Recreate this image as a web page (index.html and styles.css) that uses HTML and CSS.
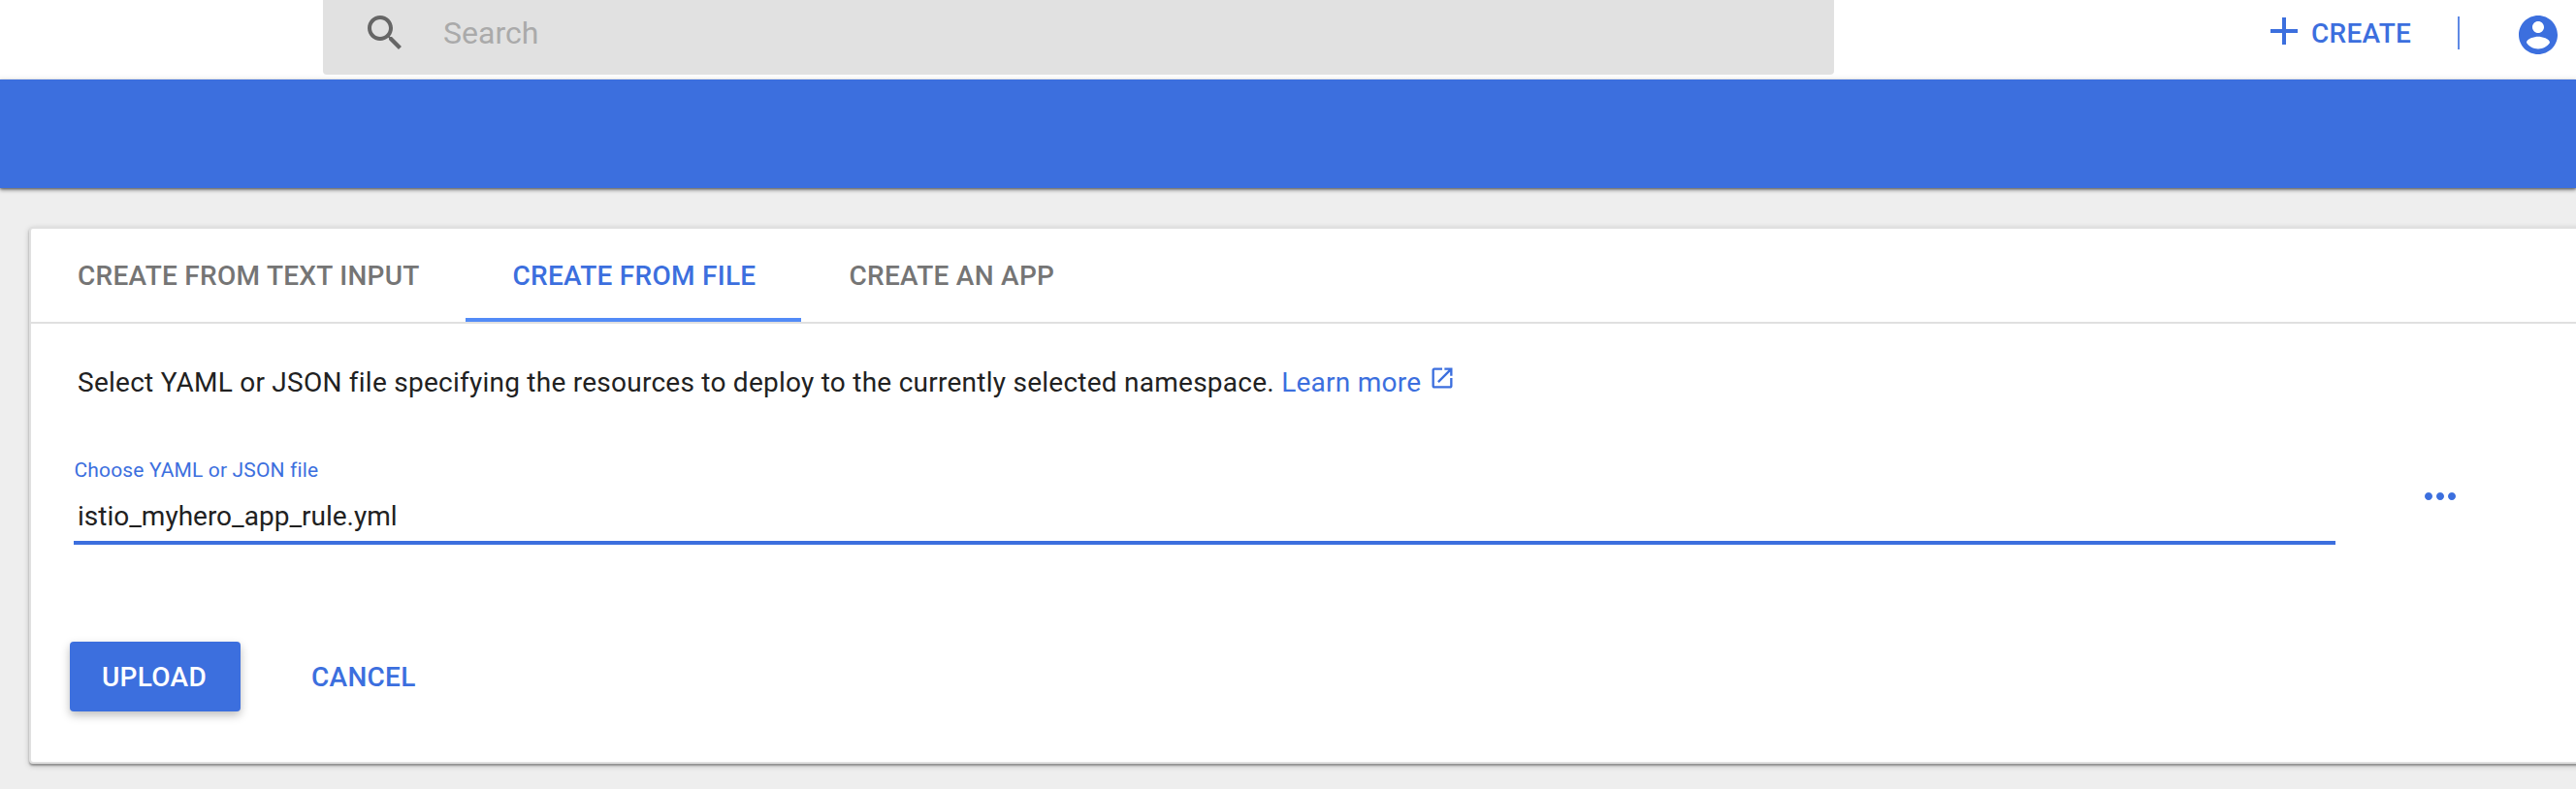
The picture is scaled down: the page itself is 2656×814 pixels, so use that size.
FILE: index.html
```html
<!DOCTYPE html>
<html lang="en">
<head>
<meta charset="utf-8">
<title>Create from file</title>
<link rel="stylesheet" href="styles.css">
</head>
<body>
<header class="topbar">
  <div class="search">
    <svg class="icon search-icon" viewBox="0 0 24 24"><path d="M15.5 14h-.79l-.28-.27C15.41 12.59 16 11.11 16 9.5 16 5.91 13.09 3 9.5 3S3 5.91 3 9.5 5.91 16 9.5 16c1.61 0 3.09-.59 4.23-1.57l.27.28v.79l5 4.99L20.49 19l-4.99-5zm-6 0C7.01 14 5 11.99 5 9.5S7.01 5 9.5 5 14 7.01 14 9.5 11.99 14 9.5 14z"/></svg>
    <span class="search-text">Search</span>
  </div>
  <div class="actions">
    <svg class="icon plus-icon" viewBox="0 0 24 24"><path d="M19 13h-6v6h-2v-6H5v-2h6V5h2v6h6z"/></svg>
    <span class="create">CREATE</span>
    <span class="divider"></span>
    <svg class="icon user-icon" viewBox="0 0 24 24"><path d="M12 2C6.48 2 2 6.48 2 12s4.48 10 10 10 10-4.48 10-10S17.52 2 12 2zm0 3c1.66 0 3 1.34 3 3s-1.34 3-3 3-3-1.34-3-3 1.34-3 3-3zm0 14.2c-2.5 0-4.71-1.28-6-3.22.03-1.99 4-3.08 6-3.08 1.99 0 5.97 1.09 6 3.08-1.29 1.94-3.5 3.22-6 3.22z"/></svg>
  </div>
</header>
<div class="bluebar"></div>
<main class="card">
  <nav class="tabs">
    <a class="tab tab-text">CREATE FROM TEXT INPUT</a>
    <a class="tab tab-file active">CREATE FROM FILE</a>
    <a class="tab tab-app">CREATE AN APP</a>
  </nav>
  <p class="help">Select YAML or JSON file specifying the resources to deploy to the currently selected namespace. <a class="link">Learn more<svg class="open-icon" viewBox="0 0 24 24"><path d="M19 19H5V5h7V3H5c-1.11 0-2 .9-2 2v14c0 1.1.89 2 2 2h14c1.1 0 2-.9 2-2v-7h-2v7zM14 3v2h3.59l-9.83 9.83 1.41 1.41L19 6.41V10h2V3h-7z"/></svg></a></p>
  <div class="field-row">
    <div class="field">
      <label class="label">Choose YAML or JSON file</label>
      <div class="value">istio_myhero_app_rule.yml</div>
    </div>
    <svg class="icon more-icon" viewBox="0 0 24 24"><path d="M6 10c-1.1 0-2 .9-2 2s.9 2 2 2 2-.9 2-2-.9-2-2-2zm12 0c-1.1 0-2 .9-2 2s.9 2 2 2 2-.9 2-2-.9-2-2-2zm-6 0c-1.1 0-2 .9-2 2s.9 2 2 2 2-.9 2-2-.9-2-2-2z"/></svg>
  </div>
  <div class="buttons">
    <a class="button primary">UPLOAD</a>
    <a class="button">CANCEL</a>
  </div>
</main>
</body>
</html>
```
FILE: styles.css
```css
* { box-sizing: border-box; }
body {
  margin: 0;
  height: 814px;
  overflow: hidden;
  background: #eee;
  color: #212121;
  font-family: Roboto, "Liberation Sans", sans-serif;
  font-size: 28px;
}
.icon { width: 48px; height: 48px; flex: none; fill: #3c6fde; }
.topbar {
  display: flex;
  width: 2656px;
  height: 82px;
  padding-left: 333px;
  background: linear-gradient(#fff 76px, #f8f8f8);
}
.search {
  display: flex;
  width: 1558px;
  height: 77px;
  padding-left: 40px;
  background: #e1e1e1;
  border-radius: 0 0 4px 4px;
}
.search-icon { margin-top: 10px; fill: #666; }
.search-text { margin-left: 36px; font-size: 32px; line-height: 69px; color: #aaa; }
.actions { display: flex; margin-left: 440px; color: #3c6fde; }
.plus-icon { margin-top: 8px; }
.create { width: 105px; margin-left: 4px; line-height: 70px; font-weight: 500; letter-spacing: 0.28px; white-space: nowrap; }
.divider { width: 2px; height: 34px; margin: 17px 57px 0 46px; background: #5f89e4; }
.user-icon { margin-top: 12px; }
.bluebar {
  height: 112px;
  background: #3c6fde;
  box-shadow: 0 2px 4px rgba(0, 0, 0, .45), 0 1px 2px rgba(0, 0, 0, .3);
}
.card {
  width: 2700px;
  height: 554px;
  margin: 40px 0 0 30px;
  background: #fff;
  border: 2px solid #e0e0e0;
  border-radius: 4px;
  box-shadow: 0 2px 6px rgba(0, 0, 0, .2), 0 2px 2px rgba(0, 0, 0, .3);
}
.tabs { display: flex; height: 98px; border-bottom: 2px solid #e0e0e0; }
.tab { height: 96px; padding-left: 48px; line-height: 97px; font-weight: 500; letter-spacing: 0.28px; color: #757575; white-space: nowrap; }
.tab-text { width: 448px; }
.tab-file { width: 346px; padding-left: 48.5px; }
.tab-app { padding-left: 49.5px; }
.active { color: #3c6fde; border-bottom: 4px solid #528bf7; }
.help { height: 40px; margin: 41px 0 0 48px; line-height: 40px; letter-spacing: 0.25px; white-space: nowrap; }
.link { color: #3c6fde; }
.open-icon { width: 28px; height: 28px; margin-left: 8px; vertical-align: 0; fill: #3c6fde; }
.field-row { display: flex; margin: 55px 0 0 44px; }
.field { width: 2332px; height: 92px; border-bottom: 4px solid #3c6fde; }
.label { display: block; height: 30px; padding-left: 0.5px; font-size: 21px; line-height: 31px; letter-spacing: 0.15px; color: #3c6fde; }
.value { margin-top: 13px; padding-left: 4px; line-height: 40px; }
.more-icon { margin: 18px 0 0 84px; }
.buttons { display: flex; gap: 40px; margin: 100px 0 0 40px; }
.button { height: 72px; padding: 0 33px; line-height: 73px; border-radius: 4px; font-weight: 500; letter-spacing: 0.28px; color: #3c6fde; }
.primary { width: 176px; color: #fff; background: #3c6fde; box-shadow: 0 4px 10px rgba(0, 0, 0, .26); }
```
